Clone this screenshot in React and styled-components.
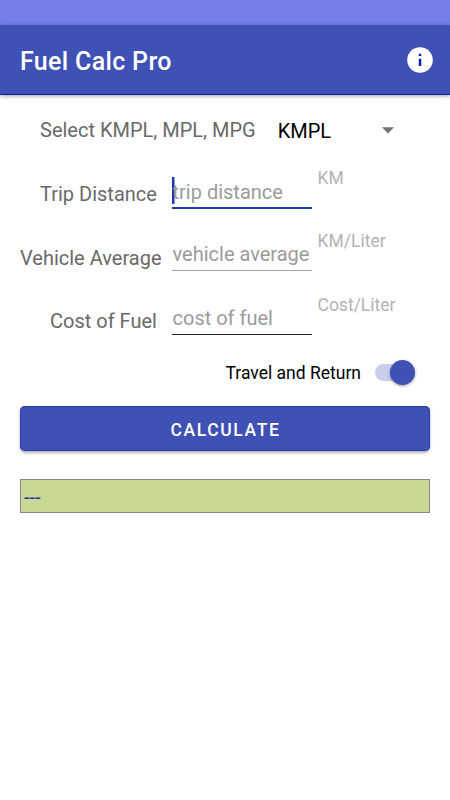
import React, { useState } from "react";
import styled, { createGlobalStyle } from "styled-components";

const GlobalStyle = createGlobalStyle`
  * {
    box-sizing: border-box;
  }

  body {
    margin: 0;
    background: #ffffff;
    font-family: Roboto, "Liberation Sans", sans-serif;
  }
`;

const Root = styled.div`
  display: flex;
  flex-direction: column;
  height: 100vh;
  overflow: hidden;
`;

const StatusBar = styled.div`
  flex: none;
  height: 25px;
  background: #757de8;
`;

const Toolbar = styled.header`
  flex: none;
  display: flex;
  align-items: center;
  justify-content: space-between;
  height: 70px;
  padding: 0 17px 0 20px;
  border-bottom: 1px solid #0a22ac;
  background: #3f51b5;
  box-shadow: 0 1px 4px rgba(0, 0, 0, 0.38);
`;

const Title = styled.h1`
  margin: 4px 0 0;
  color: #ffffff;
  font-size: 25px;
  font-weight: 500;
  line-height: 30px;
  letter-spacing: 0.33px;
`;

const InfoButton = styled.button`
  display: flex;
  padding: 0;
  border: 0;
  background: none;
`;

const Content = styled.main`
  display: flex;
  flex-direction: column;
  padding: 0 20px;
`;

const SelectorRow = styled.div`
  display: flex;
  align-items: center;
  height: 70px;
  padding-left: 20px;
`;

const Label = styled.label`
  padding-left: ${({ indent }) => indent || 0}px;
  color: #696969;
  font-size: 20px;
  line-height: 24px;
  white-space: nowrap;
`;

const Spinner = styled.div`
  display: flex;
  align-items: center;
  justify-content: space-between;
  width: 116px;
  margin-left: 22px;
  padding-top: 1px;
  color: #000000;
  font-size: 20px;
  line-height: 24px;
`;

const FieldRow = styled.div`
  display: grid;
  grid-template-columns: 152px 140px 1fr;
  height: 63.3px;

  ${Label} {
    margin-top: 17.4px;
  }
`;

const InputBox = styled.div`
  align-self: start;
  display: flex;
  align-items: center;
  height: ${({ focused }) => (focused ? 44 : 43)}px;
  padding-top: ${({ focused }) => (focused ? 11 : 10)}px;
  border-bottom: ${({ focused }) => (focused ? 2 : 1)}px solid
    ${({ line }) => line};
`;

const Caret = styled.span`
  flex: none;
  width: 3px;
  height: 27px;
  margin: -2px -3px 0 0;
  background: linear-gradient(90deg, #2038b0 66%, #8f9bd8 66%);
`;

const Input = styled.input`
  width: 100%;
  height: 24px;
  padding: 0 0 0 0.5px;
  border: 0;
  outline: 0;
  background: none;
  color: #000000;
  font: 20px/24px Roboto, "Liberation Sans", sans-serif;

  &::placeholder {
    color: #9b9b9b;
    opacity: 1;
  }
`;

const Unit = styled.span`
  padding-left: 5.5px;
  margin-top: 2px;
  color: #b3b3b3;
  font-size: 17.5px;
  line-height: 22px;
`;

const SwitchRow = styled.div`
  display: flex;
  align-items: center;
  justify-content: flex-end;
  gap: 14px;
  height: 40px;
  margin-top: -2.9px;
  padding: 1px 15px 0 0;
  color: #000000;
  font-size: 17.5px;
`;

const Track = styled.button`
  display: flex;
  align-items: center;
  justify-content: ${({ on }) => (on ? "flex-end" : "flex-start")};
  width: 40px;
  height: 17px;
  padding: 0;
  border: 0;
  border-radius: 9px;
  background: ${({ on }) => (on ? "#c9ceea" : "#c4c4c4")};
`;

const Thumb = styled.span`
  width: 25px;
  height: 25px;
  border-radius: 50%;
  background: ${({ on }) => (on ? "#3f51b5" : "#f5f5f5")};
  box-shadow: 0 1px 3px rgba(0, 0, 0, 0.4);
`;

const CalculateButton = styled.button`
  height: 45px;
  margin-top: 14px;
  padding: 2px 0 0 1px;
  border: 0;
  border-radius: 5px;
  background: #3f51b5;
  box-shadow: 0 2px 3px rgba(0, 0, 0, 0.3), inset 0 0 0 1px #2a3fb2;
  color: #ffffff;
  font: 500 17.5px Roboto, "Liberation Sans", sans-serif;
  letter-spacing: 1.6px;
`;

const Result = styled.output`
  display: flex;
  align-items: center;
  height: 34px;
  margin-top: 28px;
  padding: 1px 0 0 3px;
  border: 1px solid #888888;
  background: #c8d893;
  color: #1f35a5;
  font-size: 20px;
`;

const fields = [
  {
    id: "distance",
    label: "Trip Distance",
    hint: "trip distance",
    unit: "KM",
    indent: 20,
    line: "#1f3bb3",
    focused: true,
  },
  {
    id: "average",
    label: "Vehicle Average",
    hint: "vehicle average",
    unit: "KM/Liter",
    indent: 0,
    line: "#a3a3a3",
  },
  {
    id: "cost",
    label: "Cost of Fuel",
    hint: "cost of fuel",
    unit: "Cost/Liter",
    indent: 30,
    line: "#222222",
  },
];

function InfoIcon() {
  return (
    <svg width="26" height="26" viewBox="0 0 26 26">
      <circle cx="13" cy="13" r="12.8" fill="#ffffff" />
      <path d="M11.8 6.8h2.5v2.3h-2.5zM11.8 11.8h2.5v7.3h-2.5z" fill="#0a22ac" />
    </svg>
  );
}

function DropDownIcon() {
  return (
    <svg width="12" height="7" viewBox="0 0 12 7">
      <path d="M0 0.3h12L6 6.5z" fill="#737373" />
    </svg>
  );
}

function App() {
  const [roundTrip, setRoundTrip] = useState(true);

  return (
    <Root>
      <GlobalStyle />
      <StatusBar />
      <Toolbar>
        <Title>Fuel Calc Pro</Title>
        <InfoButton>
          <InfoIcon />
        </InfoButton>
      </Toolbar>
      <Content>
        <SelectorRow>
          <Label>Select KMPL, MPL, MPG</Label>
          <Spinner>
            KMPL
            <DropDownIcon />
          </Spinner>
        </SelectorRow>
        {fields.map(({ id, label, hint, unit, indent, line, focused }) => (
          <FieldRow key={id}>
            <Label htmlFor={id} indent={indent}>
              {label}
            </Label>
            <InputBox line={line} focused={focused}>
              {focused && <Caret />}
              <Input id={id} placeholder={hint} />
            </InputBox>
            <Unit>{unit}</Unit>
          </FieldRow>
        ))}
        <SwitchRow>
          Travel and Return
          <Track on={roundTrip} onClick={() => setRoundTrip(!roundTrip)}>
            <Thumb on={roundTrip} />
          </Track>
        </SwitchRow>
        <CalculateButton>CALCULATE</CalculateButton>
        <Result>---</Result>
      </Content>
    </Root>
  );
}

export default App;
